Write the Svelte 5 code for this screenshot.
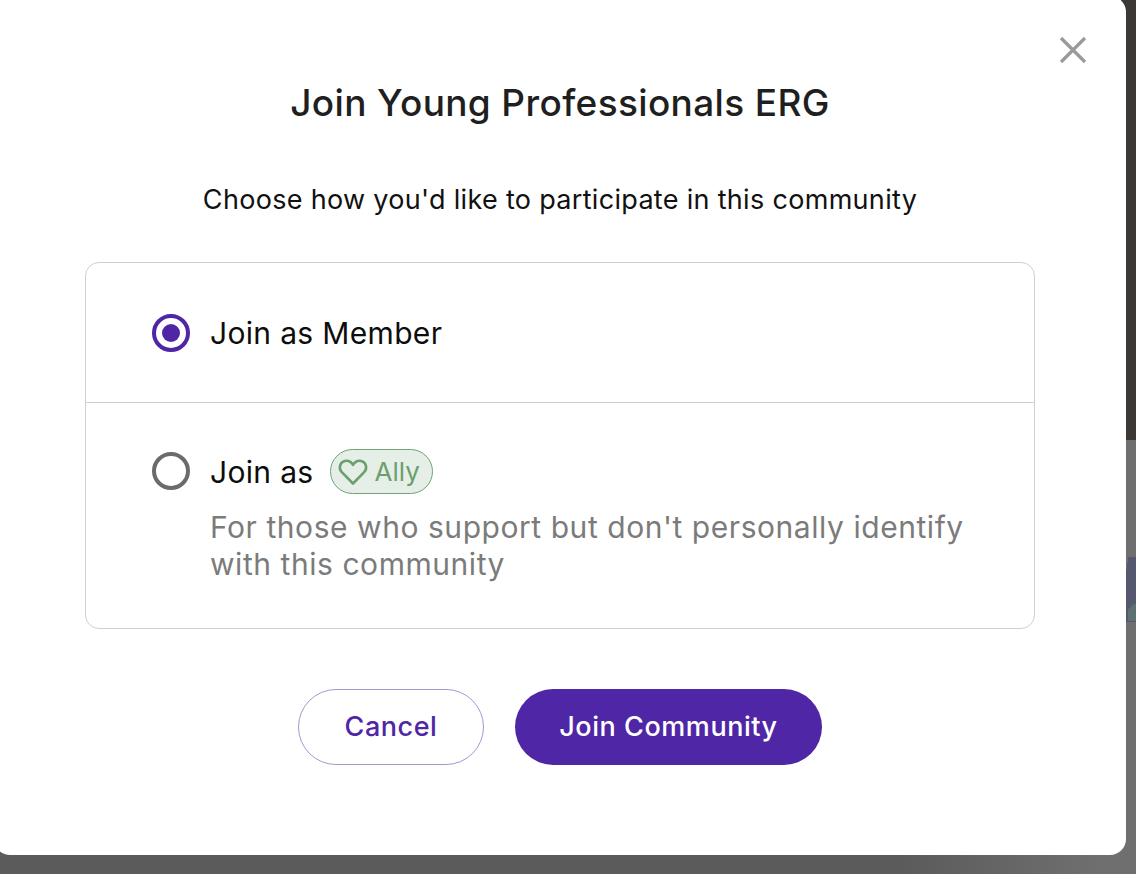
<script>
    const title = "Join Young Professionals ERG";
    const subtitle = "Choose how you'd like to participate in this community";
    let choice = $state("member");
</script>

<div class="page">
    <div class="modal">
        <button class="close" aria-label="Close">
            <svg width="30" height="30" viewBox="0 0 30 30">
                <path d="M3 3 L27 27 M27 3 L3 27" stroke="#9a9a9a" stroke-width="3.2" fill="none" />
            </svg>
        </button>

        <h2 class="title">{title}</h2>
        <p class="subtitle">{subtitle}</p>

        <div class="options">
            <button class="option member" onclick={() => (choice = "member")}>
                <span class="radio" class:checked={choice == "member"}></span>
                <span class="optionLabel">Join as Member</span>
            </button>
            <button class="option ally" onclick={() => (choice = "ally")}>
                <span class="radio" class:checked={choice == "ally"}></span>
                <span class="optionBody">
                    <span class="optionLabel allyLabel">
                        Join as
                        <span class="badge">
                            <svg width="30" height="28" viewBox="0 0 30 28">
                                <path d="M15 25.5 L3.8 14.2 C0.6 10.8 1.6 5.6 5.2 3.6 C8.8 1.7 12.6 3 15 6.8 C17.4 3 21.2 1.7 24.8 3.6 C28.4 5.6 29.4 10.8 26.2 14.2 Z" stroke="#6a9f6e" stroke-width="2.6" fill="none" stroke-linejoin="round" />
                            </svg>
                            Ally
                        </span>
                    </span>
                    <span class="optionHint">For those who support but don't personally identify with this community</span>
                </span>
            </button>
        </div>

        <div class="actions">
            <button class="btn cancel">Cancel</button>
            <button class="btn join">Join Community</button>
        </div>
    </div>
</div>

<style>
    :global(body) {
        margin: 0;
        overflow: hidden;
    }

    .page {
        position: relative;
        width: 1136px;
        height: 874px;
        overflow: hidden;
        font-family: "Inter", "Liberation Sans", sans-serif;
        background:
            linear-gradient(135deg, transparent 0 4px, #5d7270 4px) 1128px 604px / 8px 17px no-repeat,
            linear-gradient(to top left, #55586f 0 88%, transparent 88%) 1126px 557px / 10px 65px no-repeat,
            linear-gradient(to bottom, #3b3835 0 440px, transparent 440px),
            linear-gradient(to right, #5b5b5b 0 900px, #6f6f6f 1100px);
    }

    .modal {
        position: relative;
        box-sizing: border-box;
        width: 1132px;
        height: 859px;
        margin: -4px 0 0 -6px;
        padding-top: 84px;
        background: #fff;
        border-radius: 16px;
        display: flex;
        flex-direction: column;
        align-items: center;
    }

    .close {
        position: absolute;
        top: 39px;
        right: 38px;
        padding: 0;
        border: 0;
        background: none;
        width: 30px;
        height: 30px;
    }

    .title {
        margin: 0;
        font-size: 37px;
        line-height: 46px;
        font-weight: 500;
        letter-spacing: 0.36px;
        color: #1f1f1f;
    }

    .subtitle {
        margin: 56px 0 0;
        font-size: 27px;
        line-height: 36px;
        letter-spacing: 0.31px;
        color: #111;
    }

    .options {
        box-sizing: border-box;
        width: 950px;
        height: 367px;
        margin-top: 44px;
        border: 1px solid #cfcfcf;
        border-radius: 14px;
        display: flex;
        flex-direction: column;
    }

    .option {
        display: flex;
        align-items: flex-start;
        gap: 20px;
        padding: 0 0 0 66px;
        border: 0;
        background: none;
        font: inherit;
        text-align: left;
    }

    .member {
        height: 140px;
        align-items: center;
        border-bottom: 1px solid #cfcfcf;
    }

    .ally {
        flex: 1;
        padding-top: 49px;
    }

    .radio {
        box-sizing: border-box;
        flex: none;
        width: 38px;
        height: 38px;
        border: 4px solid #6b6b6b;
        border-radius: 50%;
        display: flex;
        align-items: center;
        justify-content: center;
    }

    .radio.checked {
        border-color: #4f27a6;
    }

    .radio.checked::after {
        content: "";
        width: 18px;
        height: 18px;
        border-radius: 50%;
        background: #4f27a6;
    }

    .optionBody {
        display: flex;
        flex-direction: column;
    }

    .optionLabel {
        display: flex;
        align-items: center;
        gap: 15px;
        font-size: 30px;
        line-height: 38px;
        letter-spacing: 0.33px;
        color: #0d0d0d;
    }

    .allyLabel {
        gap: 16px;
        margin-top: -3px;
        line-height: 36px;
    }

    .badge {
        box-sizing: border-box;
        display: inline-flex;
        align-items: center;
        gap: 7px;
        width: 103px;
        height: 45px;
        padding: 0 0 0 7px;
        border: 1px solid #6fa474;
        border-radius: 23px;
        background: #e6efe7;
        color: #6a9f6e;
        font-size: 26px;
        letter-spacing: 0;
    }

    .optionHint {
        width: 790px;
        margin-top: 15px;
        font-size: 30px;
        line-height: 37px;
        letter-spacing: 0.55px;
        color: #7b7b7b;
    }

    .actions {
        display: flex;
        gap: 31px;
        margin-top: 60px;
    }

    .btn {
        box-sizing: border-box;
        height: 76px;
        padding: 0 0 2px;
        border-radius: 38px;
        font: inherit;
        font-size: 27px;
        font-weight: 500;
        letter-spacing: 0.55px;
    }

    .cancel {
        width: 186px;
        background: #fff;
        border: 1px solid #a696d0;
        color: #4f27a6;
    }

    .join {
        width: 307px;
        background: #4f27a6;
        border: 0;
        color: #fff;
    }
</style>
